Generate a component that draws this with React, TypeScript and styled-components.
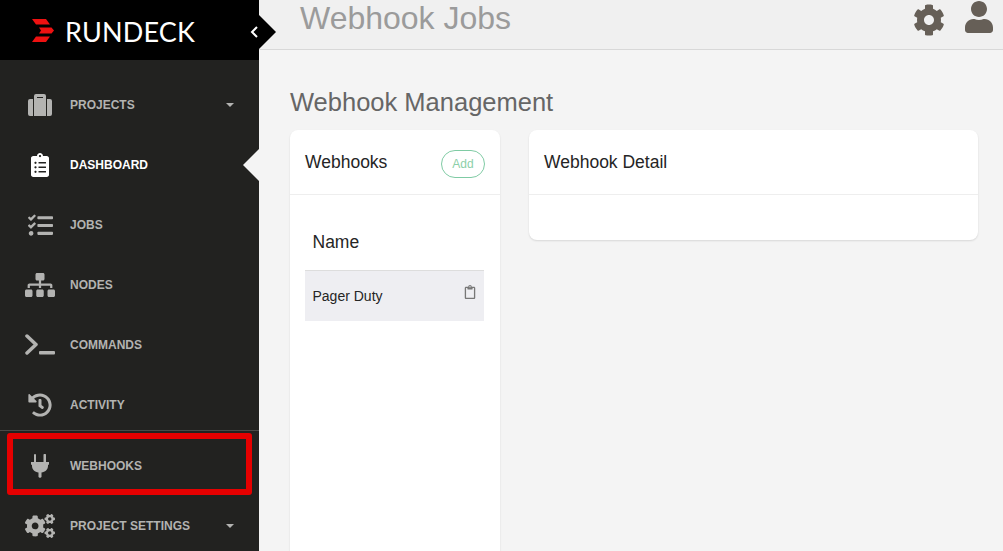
import React from 'react';
import styled, { createGlobalStyle } from 'styled-components';
import {
  FaClipboardList,
  FaTasks,
  FaSitemap,
  FaHistory,
  FaCogs,
  FaCog,
  FaUser,
  FaRegClipboard,
} from 'react-icons/fa';

const GlobalStyle = createGlobalStyle`
  html, body {
    margin: 0;
    padding: 0;
    height: 100%;
    overflow: hidden;
    background: #f4f4f4;
    font-family: "Liberation Sans", Arial, sans-serif;
  }
  * { box-sizing: border-box; }
`;

const Page = styled.div`
  display: flex;
  height: 551px;
  overflow: hidden;
`;

const Sidebar = styled.aside`
  position: relative;
  width: 259px;
  flex: none;
  background: #222220;
`;

const Brand = styled.div`
  position: relative;
  display: flex;
  align-items: center;
  gap: 11px;
  height: 60px;
  padding-left: 32px;
  background: #000;
`;

const BrandName = styled.span`
  margin-top: 2px;
  font-family: Lato, sans-serif;
  font-size: 27px;
  letter-spacing: 0.15px;
  color: #fff;
`;

const Toggle = styled.div`
  position: absolute;
  top: 15px;
  left: 259px;
  width: 0;
  height: 0;
  border-top: 17px solid transparent;
  border-bottom: 17px solid transparent;
  border-left: 17px solid #000;
  z-index: 2;
`;

const ToggleChevron = styled.svg`
  position: absolute;
  top: 25px;
  left: 250px;
  z-index: 3;
`;

const Nav = styled.nav`
  padding-top: 15px;
`;

const Item = styled.div<{ $active?: boolean }>`
  position: relative;
  display: flex;
  align-items: center;
  height: 60px;
  font-size: 12px;
  font-weight: 700;
  color: ${(p) => (p.$active ? '#fff' : '#b3b3b1')};
`;

const IconSlot = styled.span`
  display: flex;
  align-items: center;
  justify-content: center;
  width: 30px;
  margin: 0 15px 0 25px;
`;

const Caret = styled.span`
  position: absolute;
  top: 28px;
  left: 226px;
  width: 0;
  height: 0;
  border-left: 4px solid transparent;
  border-right: 4px solid transparent;
  border-top: 4px solid #b3b3b1;
`;

const ActiveNotch = styled.span`
  position: absolute;
  top: 14px;
  right: 0;
  width: 0;
  height: 0;
  border-top: 16px solid transparent;
  border-bottom: 16px solid transparent;
  border-right: 16px solid #f4f4f4;
`;

const Divider = styled.hr`
  height: 1px;
  margin: -5px 0 5px;
  border: 0;
  background: #4a4a48;
`;

const Highlight = styled.div`
  position: absolute;
  top: -3px;
  left: 7px;
  width: 245px;
  height: 62px;
  border: 6px solid #e60000;
  border-radius: 3px;
  pointer-events: none;
`;

const Main = styled.main`
  flex: 1;
  min-width: 0;
`;

const Header = styled.header`
  display: flex;
  align-items: flex-start;
  justify-content: space-between;
  height: 50px;
  padding: 0 8px 0 41px;
  background: #f0f0f0;
  border-bottom: 1px solid #d8d8d8;
`;

const PageTitle = styled.h1`
  margin: 0;
  font-size: 32px;
  font-weight: 400;
  line-height: 37px;
  color: #9b9b9b;
`;

const HeaderIcons = styled.div`
  display: flex;
  align-items: flex-start;
  gap: 18px;
  color: #665f57;
`;

const Content = styled.div`
  padding: 36px 25px 0 31px;
`;

const SectionTitle = styled.h2`
  margin: 0 0 12px;
  font-size: 25.5px;
  font-weight: 400;
  line-height: 32px;
  color: #666;
`;

const Columns = styled.div`
  display: grid;
  grid-template-columns: 210px 449px;
  gap: 29px;
  align-items: start;
`;

const Card = styled.section<{ $tall?: boolean }>`
  height: ${(p) => (p.$tall ? '500px' : '110px')};
  background: #fff;
  border-radius: 8px;
  box-shadow: 0 1px 2px rgba(0, 0, 0, 0.12);
`;

const CardHeader = styled.div`
  display: flex;
  align-items: center;
  justify-content: space-between;
  height: 65px;
  padding: 0 15px;
  border-bottom: 1px solid #eee;
`;

const CardTitle = styled.h3`
  margin: 1px 0 0;
  font-size: 17.5px;
  font-weight: 400;
  color: #252525;
`;

const AddButton = styled.button`
  width: 44px;
  height: 28px;
  margin-top: 4px;
  padding: 0;
  background: #fff;
  border: 1px solid #7fcba4;
  border-radius: 14px;
  font-family: "Liberation Sans", Arial, sans-serif;
  font-size: 12px;
  color: #8ccfa8;
`;

const CardBody = styled.div`
  padding: 22px 16px 0 15px;
`;

const TableHead = styled.div`
  height: 54px;
  padding: 14px 8px 0 7.5px;
  font-size: 17.5px;
  line-height: 22px;
  color: #252525;
  border-bottom: 1px solid #ddd;
`;

const Row = styled.div`
  display: flex;
  align-items: center;
  justify-content: space-between;
  height: 50px;
  padding: 0 7px 0 7.5px;
  background: #eeeef2;
  font-size: 14px;
  color: #252525;
`;

const CopyIcon = styled(FaRegClipboard)`
  margin-bottom: 8px;
  color: #777;
`;

const LogoMark = () => (
  <svg width="22" height="23" viewBox="0 0 22 23" aria-hidden="true">
    <path d="M0 0H14L18 5.500H4Z M7 8.500H19.500L22 11.500L19.500 14.500H7L9 11.500Z M4 17.500H18L14 23H0Z" fill="#ee1111" />
  </svg>
);

const BriefcaseIcon = () => (
  <svg width="24" height="22" viewBox="0 0 24 22" aria-hidden="true">
    <path
      d="M0 7a2 2 0 0 1 2-2h3v17H2a2 2 0 0 1-2-2Z M19 5h3a2 2 0 0 1 2 2v13a2 2 0 0 1-2 2h-3Z"
      fill="#b3b3b1"
    />
    <path
      fillRule="evenodd"
      d="M6 2a2 2 0 0 1 2-2h8a2 2 0 0 1 2 2v20H6Z M9 3h6v1H9Z"
      fill="#b3b3b1"
    />
  </svg>
);

const TerminalIcon = () => (
  <svg width="30" height="22" viewBox="0 0 30 22" aria-hidden="true">
    <path d="M2 2L11 10.500L2 19" fill="none" stroke="#b3b3b1" strokeWidth="3.500" strokeLinecap="round" strokeLinejoin="round" />
    <rect x="14" y="17" width="16" height="3.500" rx="1" fill="#b3b3b1" />
  </svg>
);

const PlugIcon = () => (
  <svg width="18" height="24" viewBox="0 0 18 24" aria-hidden="true">
    <path
      d="M3 1a1 1 0 0 1 2 0v7h-2Z M12.500 1a1 1 0 0 1 2.500 0v7h-2.500Z M0 8h18v2a1 1 0 0 1-1 1v1c0 3.500-3 6-6.500 6.500V23l-1.500 1-1.500-1v-4.500C4 18 1 15.500 1 12v-1a1 1 0 0 1-1-1Z"
      fill="#b3b3b1"
    />
  </svg>
);

const navItems = [
  { label: 'PROJECTS', icon: <BriefcaseIcon />, caret: true },
  { label: 'DASHBOARD', icon: <FaClipboardList size={24} />, active: true },
  { label: 'JOBS', icon: <FaTasks size={25} /> },
  { label: 'NODES', icon: <FaSitemap size={30} /> },
  { label: 'COMMANDS', icon: <TerminalIcon /> },
  { label: 'ACTIVITY', icon: <FaHistory size={24} /> },
];

const App: React.FC = () => {
  return (
    <Page>
      <GlobalStyle />
      <Sidebar>
        <Brand>
          <LogoMark />
          <BrandName>RUNDECK</BrandName>
        </Brand>
        <Toggle />
        <ToggleChevron width="9" height="14" viewBox="0 0 9 14">
          <path d="M7 2L2 7L7 12" fill="none" stroke="#fff" strokeWidth="2" />
        </ToggleChevron>
        <Nav>
          {navItems.map((item) => (
            <Item key={item.label} $active={item.active}>
              <IconSlot>{item.icon}</IconSlot>
              {item.label}
              {item.caret && <Caret />}
              {item.active && <ActiveNotch />}
            </Item>
          ))}
          <Divider />
          <Item>
            <IconSlot>
              <PlugIcon />
            </IconSlot>
            WEBHOOKS
            <Highlight />
          </Item>
          <Item>
            <IconSlot>
              <FaCogs size={30} />
            </IconSlot>
            PROJECT SETTINGS
            <Caret />
          </Item>
        </Nav>
      </Sidebar>
      <Main>
        <Header>
          <PageTitle>Webhook Jobs</PageTitle>
          <HeaderIcons>
            <FaCog size={32} style={{ marginTop: 4 }} />
            <FaUser size={32} style={{ marginTop: 1 }} />
          </HeaderIcons>
        </Header>
        <Content>
          <SectionTitle>Webhook Management</SectionTitle>
          <Columns>
            <Card $tall>
              <CardHeader>
                <CardTitle>Webhooks</CardTitle>
                <AddButton>Add</AddButton>
              </CardHeader>
              <CardBody>
                <TableHead>Name</TableHead>
                <Row>
                  Pager Duty
                  <CopyIcon size={14} />
                </Row>
              </CardBody>
            </Card>
            <Card>
              <CardHeader>
                <CardTitle>Webhook Detail</CardTitle>
              </CardHeader>
            </Card>
          </Columns>
        </Content>
      </Main>
    </Page>
  );
};

export default App;
